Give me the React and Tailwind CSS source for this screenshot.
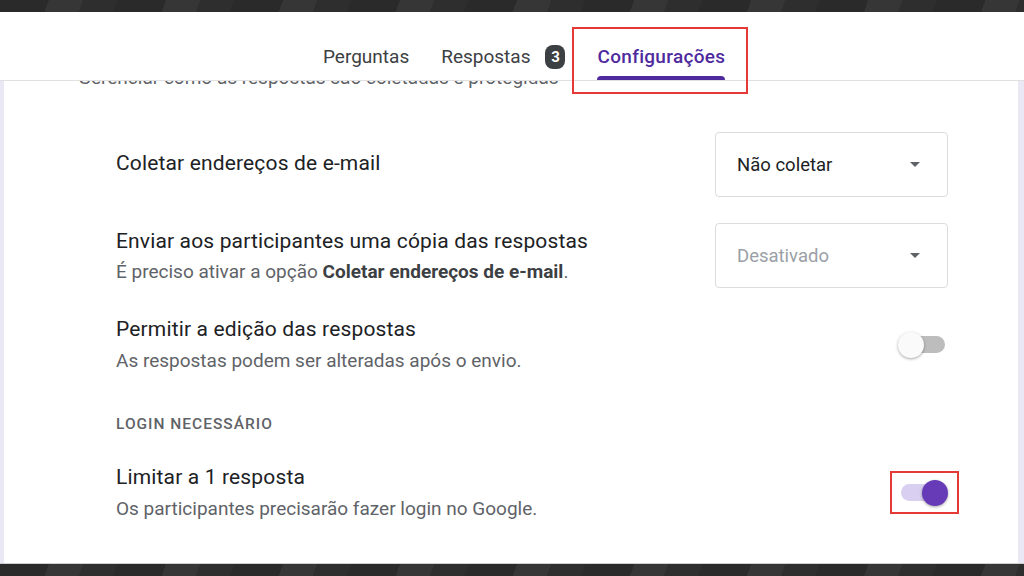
import React from "react";

const STRIPES =
  "bg-[#2a2a2a] bg-[repeating-linear-gradient(110deg,#2a2a2a_0px,#2a2a2a_46px,#363636_46px,#363636_78px,#2e2e2e_78px,#2e2e2e_110px)]";

function Dropdown({ value, muted }) {
  return (
    <div className="w-[233px] h-[65px] shrink-0 border border-[#dadce0] rounded-[4px] flex items-center pl-[21px] pr-[27px]">
      <span className={`flex-1 text-[18.5px] leading-[24px] ${muted ? "text-[#9aa0a6]" : "text-[#202124]"}`}>
        {value}
      </span>
      <span className="w-0 h-0 border-l-[5.5px] border-r-[5.5px] border-t-[5.5px] border-l-transparent border-r-transparent border-t-[#5f6368]" />
    </div>
  );
}

function Toggle({ on }) {
  return (
    <div className="relative w-[50px] h-[26px] shrink-0">
      <div
        className={`absolute left-[3px] top-[4.5px] w-[44px] h-[17px] rounded-full ${
          on ? "bg-[#d9cff0]" : "bg-[#bdbdbd]"
        }`}
      />
      <div
        className={`absolute top-0 w-[26px] h-[26px] rounded-full shadow-[0_1px_3px_rgba(0,0,0,0.35)] ${
          on ? "right-0 bg-[#673ab7]" : "left-0 bg-[#fafafa]"
        }`}
      />
    </div>
  );
}

function Tab({ label, active, badge }) {
  return (
    <div className="h-full flex flex-col justify-end px-[13px]">
      <div className="flex items-center mb-[7px]">
        <span
          className={`text-[19px] leading-[24px] ${
            active ? "text-[#4f2a9e] font-medium tracking-[0.3px]" : "text-[#3c4043]"
          }`}
        >
          {label}
        </span>
        {badge && (
          <span className="ml-[15px] w-[20px] h-[24px] rounded-[8px] bg-[#3c4043] text-white text-[15px] font-bold flex items-center justify-center">
            {badge}
          </span>
        )}
      </div>
      <div className={`h-[4px] rounded-t-[4px] ${active ? "bg-[#4f2a9e]" : "bg-transparent"}`} />
    </div>
  );
}

export default function App() {
  return (
    <div className="relative w-[1024px] h-[576px] overflow-hidden flex flex-col bg-white font-['Roboto','Liberation_Sans',sans-serif]">
      <div className={`h-[12px] shrink-0 ${STRIPES}`} />

      {/* Header */}
      <header className="h-[69px] shrink-0 border-b border-[#e0e0e0] flex pl-[310px] gap-[6px] bg-white">
        <Tab label="Perguntas" />
        <Tab label="Respostas" badge="3" />
        <Tab label="Configurações" active />
      </header>

      {/* Content */}
      <main className="flex-1 overflow-hidden border-l-[4px] border-r-[6px] border-[#ebe8f5] flex flex-col">
        <p className="-mt-[14px] ml-[74px] text-[19px] leading-[22px] text-[#5f6368]">
          Gerenciar como as respostas são coletadas e protegidas
        </p>

        <div className="ml-[112px] w-[832px] flex flex-col">
          <div className="mt-[43px] flex items-center justify-between">
            <span className="text-[21px] leading-[26px] text-[#202124] tracking-[0.15px] -mt-[4px]">
              Coletar endereços de e-mail
            </span>
            <Dropdown value="Não coletar" />
          </div>

          <div className="mt-[26px] flex items-center justify-between">
            <div className="flex flex-col">
              <span className="text-[21px] leading-[26px] text-[#202124] tracking-[0.15px]">
                Enviar aos participantes uma cópia das respostas
              </span>
              <span className="mt-[6px] text-[19px] leading-[24px] text-[#5f6368]">
                É preciso ativar a opção <b className="font-bold text-[#3c4043]">Coletar endereços de e-mail</b>.
              </span>
            </div>
            <Dropdown value="Desativado" muted />
          </div>

          <div className="mt-[28px] flex items-center justify-between">
            <div className="flex flex-col">
              <span className="text-[21px] leading-[26px] text-[#202124] tracking-[0.15px]">
                Permitir a edição das respostas
              </span>
              <span className="mt-[7px] text-[19px] leading-[24px] text-[#5f6368]">
                As respostas podem ser alteradas após o envio.
              </span>
            </div>
            <Toggle />
          </div>

          <span className="mt-[41px] text-[15.5px] leading-[20px] font-medium text-[#5f6368] tracking-[1px] uppercase">
            Login necessário
          </span>

          <div className="mt-[30px] flex items-center justify-between">
            <div className="flex flex-col">
              <span className="text-[21px] leading-[26px] text-[#202124] tracking-[0.15px]">
                Limitar a 1 resposta
              </span>
              <span className="mt-[7px] text-[19px] leading-[24px] text-[#5f6368]">
                Os participantes precisarão fazer login no Google.
              </span>
            </div>
            <Toggle on />
          </div>
        </div>
      </main>

      <div className={`h-[13px] shrink-0 border-t border-[#cfcfcf] ${STRIPES}`} />

      {/* Annotation boxes */}
      <div className="absolute left-[572px] top-[27px] w-[176px] h-[67px] border-2 border-[#e53935] pointer-events-none" />
      <div className="absolute left-[890px] top-[471px] w-[69px] h-[43px] border-2 border-[#e53935] pointer-events-none" />
    </div>
  );
}
